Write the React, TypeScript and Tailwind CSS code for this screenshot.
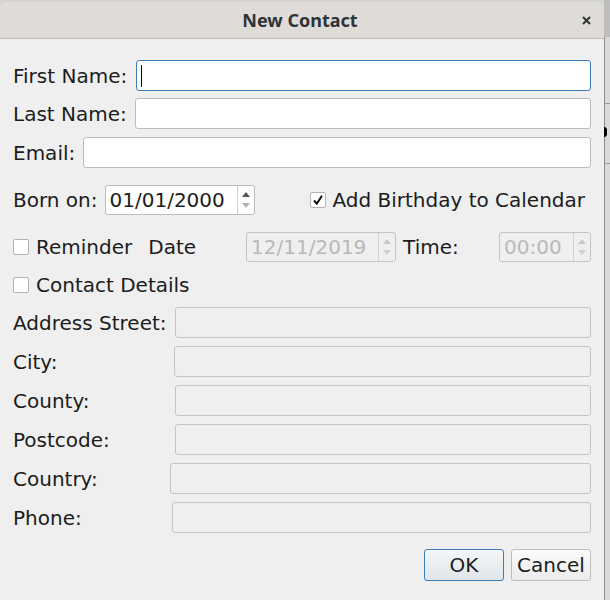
import React from 'react';

const Field: React.FC<{ focused?: boolean; disabled?: boolean }> = ({ focused, disabled }) => (
  <div
    className={`relative h-full flex-1 rounded-[3px] border ${
      focused ? 'border-[#3b7dbb] bg-white' : disabled ? 'border-[#c4c4c4] bg-[#efefef]' : 'border-[#bdbdbd] bg-white'
    }`}
  >
    {focused && <div className="absolute left-[4px] top-[4px] h-[22px] w-px bg-black" />}
  </div>
);

const Spin: React.FC<{ value: string; width: string; disabled?: boolean }> = ({ value, width, disabled }) => (
  <div
    className={`flex h-full ${width} rounded-[3px] border ${
      disabled ? 'border-[#c4c4c4] bg-[#efefef] text-[#b9b9b9]' : 'border-[#bdbdbd] bg-white text-[#1c1c1c]'
    }`}
  >
    <div className="flex flex-1 items-center pl-[4px]">{value}</div>
    <div className={`flex w-[17px] flex-col items-center justify-center gap-[6px] border-l ${disabled ? 'border-[#d2d2d2]' : 'border-[#cfcfcf]'}`}>
      <svg width="8" height="5" viewBox="0 0 8 5">
        <path d="M4 0 L8 5 L0 5 Z" fill={disabled ? '#c8c8c8' : '#555'} />
      </svg>
      <svg width="8" height="5" viewBox="0 0 8 5">
        <path d="M0 0 L8 0 L4 5 Z" fill={disabled ? '#d0d0d0' : '#b4b4b4'} />
      </svg>
    </div>
  </div>
);

const Check: React.FC<{ checked?: boolean }> = ({ checked }) => (
  <div className="flex h-[16px] w-[16px] items-center justify-center rounded-[2px] border border-[#b2b2b2] bg-white">
    {checked && (
      <svg width="12" height="12" viewBox="0 0 12 12">
        <path d="M2 6.5 L4.8 9.6 L10 1.8" fill="none" stroke="#111" strokeWidth="2" />
      </svg>
    )}
  </div>
);

export default function App() {
  const details = [
    { label: 'Address Street:', w: 'w-[153px]' },
    { label: 'City:', w: 'w-[152px]' },
    { label: 'County:', w: 'w-[153px]' },
    { label: 'Postcode:', w: 'w-[153px]' },
    { label: 'Country:', w: 'w-[148px]' },
    { label: 'Phone:', w: 'w-[150px]' },
  ];

  return (
    <div className="flex h-[600px] w-[610px] overflow-hidden bg-[#d4d4d4] font-['DejaVu_Sans',sans-serif] text-[20px] text-[#1c1c1c]">
      <div className="mt-[2px] flex w-[604px] flex-col rounded-t-[7px] bg-[#efefef]">
        {/* Title bar */}
        <div className="flex h-[37px] items-center rounded-t-[7px] border-b border-[#c2bfba] bg-[#dfdcd8] pl-[14px] pr-[13px]">
          <div className="flex-1 pl-[4px] text-center font-['Noto_Sans',sans-serif] text-[18px] font-bold text-[#2e3436]">New Contact</div>
          <svg width="9" height="9" viewBox="0 0 9 9">
            <path d="M1 1 L8 8 M8 1 L1 8" stroke="#2e3436" strokeWidth="2" />
          </svg>
        </div>

        <div className="flex flex-col px-[13px] pt-[21px]">
          <div className="flex h-[31px] items-center gap-[9px]">
            <span>First Name:</span>
            <Field focused />
          </div>
          <div className="mt-[7px] flex h-[31px] items-center gap-[8px]">
            <span>Last Name:</span>
            <Field />
          </div>
          <div className="mt-[8px] flex h-[31px] items-center gap-[8px]">
            <span>Email:</span>
            <Field />
          </div>

          {/* Born on */}
          <div className="mt-[17px] flex h-[30px] items-center">
            <span>Born on:</span>
            <div className="ml-[7px] h-full">
              <Spin value="01/01/2000" width="w-[150px]" />
            </div>
            <div className="ml-auto flex items-center gap-[6px] pr-[6px]">
              <Check checked />
              <span>Add Birthday to Calendar</span>
            </div>
          </div>

          {/* Reminder */}
          <div className="mt-[17px] flex h-[30px] items-center">
            <Check />
            <span className="ml-[7px]">Reminder</span>
            <span className="ml-[16px]">Date</span>
            <div className="ml-[50px] h-full">
              <Spin value="12/11/2019" width="w-[150px]" disabled />
            </div>
            <span className="ml-[7px]">Time:</span>
            <div className="ml-auto h-full">
              <Spin value="00:00" width="w-[92px]" disabled />
            </div>
          </div>

          <div className="mt-[8px] flex h-[30px] items-center gap-[7px]">
            <Check />
            <span>Contact Details</span>
          </div>

          {details.map((d, i) => (
            <div key={d.label} className={`${i === 0 ? 'mt-[7px]' : 'mt-[8px]'} flex h-[31px] items-center gap-[9px]`}>
              <span className={`${d.w} shrink-0 whitespace-nowrap`}>{d.label}</span>
              <Field disabled />
            </div>
          ))}

          {/* Buttons */}
          <div className="mt-[16px] flex h-[32px] justify-end gap-[7px]">
            <button className="h-full w-[80px] rounded-[3px] border border-[#3b7dbb] bg-gradient-to-b from-[#f5f7f9] to-[#dfe5ea] text-[#1c1c1c]">
              OK
            </button>
            <button className="h-full w-[80px] rounded-[3px] border border-[#bdbdbd] bg-gradient-to-b from-[#fbfbfb] to-[#ececec] text-[#1c1c1c]">
              Cancel
            </button>
          </div>
        </div>
      </div>

      {/* Window behind */}
      <div className="flex flex-1 flex-col">
        <div className="h-[37px] bg-[#bdbdbd]" />
        <div className="flex flex-1 flex-col border-l border-[#8f8f8f] bg-[#dadada]">
          <div className="mt-[66px] h-px bg-[#9a9a9a]" />
          <div className="mt-[23px] ml-[-1px] h-[10px] w-[3px] rounded-r-full bg-black" />
          <div className="mt-[26px] h-px bg-[#9a9a9a]" />
        </div>
      </div>
    </div>
  );
}
